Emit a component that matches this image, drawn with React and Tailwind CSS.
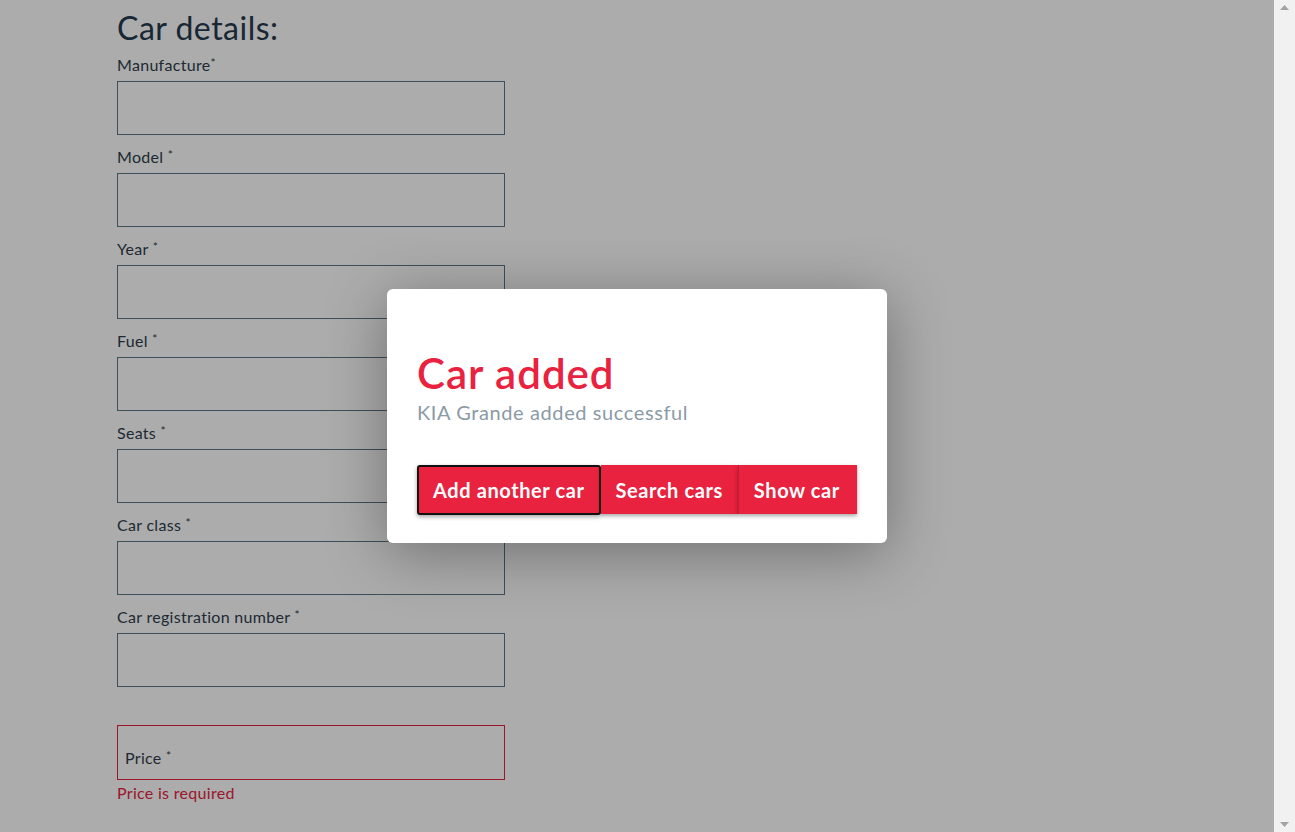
import React from "react";

const FIELDS = [
  { label: "Manufacture", space: false },
  { label: "Model", space: true },
  { label: "Year", space: true },
  { label: "Fuel", space: true },
  { label: "Seats", space: true },
  { label: "Car class", space: true },
  { label: "Car registration number", space: true },
];

function Field({ label, space }) {
  return (
    <div className="flex flex-col">
      <label className="h-6 leading-6 text-[16px] tracking-[0.3px] text-[#2e3e4c]">
        {label}
        {space ? " " : ""}
        <sup className="text-[12px] relative -top-[4px]">*</sup>
      </label>
      <input className="mt-1 h-[54px] w-[388px] border border-[#5b7586] bg-white outline-none" />
    </div>
  );
}

export default function App() {
  return (
    <div
      className="flex h-screen w-full overflow-hidden bg-white"
      style={{ fontFamily: "Lato, 'Open Sans', sans-serif" }}
    >
      <div className="relative flex-1 h-full">
        {/* form */}
        <div className="pl-[117px] pt-[9px] flex flex-col">
          <h2 className="text-[32px] leading-[38px] tracking-[0.5px] text-[#253a4f] mb-[6px]">Car details:</h2>
          <div className="flex flex-col gap-[10px]">
            {FIELDS.map((f) => (
              <Field key={f.label} {...f} />
            ))}
          </div>
          <div className="mt-[38px] relative h-[55px] w-[388px] border border-[#e8223f] bg-white">
            <span className="absolute left-[7px] top-[20px] text-[16px] tracking-[0.3px] text-[#2e3e4c]">
              Price <sup className="text-[12px] relative -top-[4px]">*</sup>
            </span>
          </div>
          <div className="mt-[1px] text-[16px] leading-6 tracking-[0.3px] text-[#e8223f]">Price is required</div>
        </div>

        {/* overlay + modal */}
        <div className="absolute inset-0 bg-black/[0.325] flex items-center justify-center">
          <div className="w-[500px] h-[254px] bg-white rounded-[6px] shadow-[0_10px_60px_rgba(0,0,0,0.35)] px-[30px] pt-[60px] flex flex-col">
            <h1 className="text-[42px] leading-[48px] font-semibold tracking-[1px] text-[#e8223f]">Car added</h1>
            <p className="text-[20px] leading-[22px] tracking-[0.6px] text-[#8a9aa6] mt-[4px]">KIA Grande added successful</p>
            <div className="flex mt-[42px]">
              <button className="h-[50px] px-[14px] bg-[#e8223f] text-white text-[20px] font-bold tracking-[0.6px] border-2 border-[#111] rounded-[3px] shadow-[0_2px_4px_rgba(0,0,0,0.35)]">
                Add another car
              </button>
              <button className="h-[49px] px-[15px] bg-[#e8223f] text-white text-[20px] font-bold tracking-[0.6px] shadow-[0_2px_4px_rgba(0,0,0,0.35)]">
                Search cars
              </button>
              <button className="h-[49px] pl-[15px] pr-[17px] bg-[#e8223f] text-white text-[20px] font-bold tracking-[0.6px] border-l border-[#c41c35] shadow-[0_2px_4px_rgba(0,0,0,0.35)]">
                Show car
              </button>
            </div>
          </div>
        </div>
      </div>

      {/* scrollbar */}
      <div className="w-[21px] h-full bg-[#f1f1f1] flex flex-col justify-between items-center py-[5px]">
        <svg width="9" height="5" viewBox="0 0 9 5">
          <path d="M4.5 0 L9 5 L0 5 Z" fill="#a3a3a3" />
        </svg>
        <svg width="9" height="5" viewBox="0 0 9 5">
          <path d="M0 0 L9 0 L4.5 5 Z" fill="#a3a3a3" />
        </svg>
      </div>
    </div>
  );
}
